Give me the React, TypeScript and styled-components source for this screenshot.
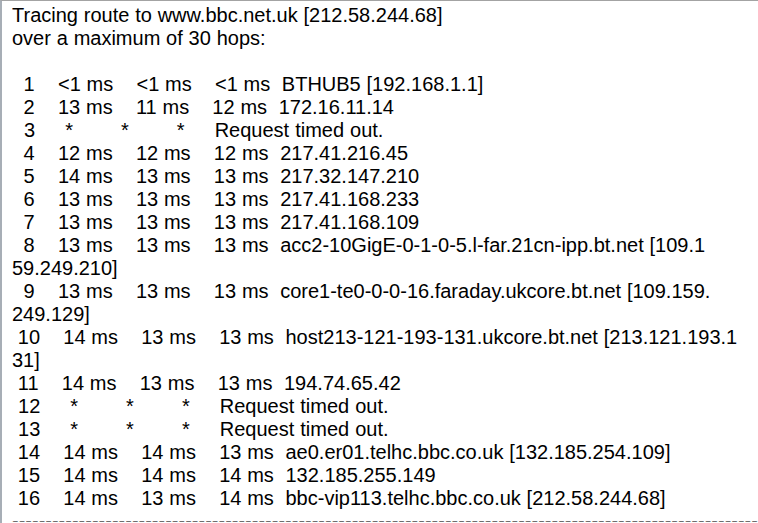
import React from "react";
import styled, { createGlobalStyle } from "styled-components";

const GlobalStyle = createGlobalStyle`
  html, body {
    margin: 0;
    padding: 0;
    background: #ffffff;
  }
  body {
    width: 758px;
    height: 523px;
    overflow: hidden;
  }
`;

const Window = styled.div`
  box-sizing: border-box;
  width: 758px;
  height: 523px;
  overflow: hidden;
  background: #ffffff;
  border-top: 1px solid #a3a3a3;
  border-left: 2px solid #a7aeb6;
  padding: 3px 0 0 10px;
`;

const Output = styled.div`
  display: flex;
  flex-direction: column;
  font-family: "Liberation Sans", Arial, sans-serif;
  font-size: 20px;
  line-height: 23px;
  color: #000000;
`;

const Line = styled.div<{ $timeout?: boolean }>`
  white-space: pre;
  height: 23px;
  overflow: hidden;
  word-spacing: ${(p) => (p.$timeout ? "0.45px" : "0.25px")};
`;

const Rule = styled.div`
  white-space: pre;
  height: 12px;
  line-height: 23px;
  overflow: hidden;
  color: #222222;
`;

const lines: string[] = [
  "Tracing route to www.bbc.net.uk [212.58.244.68]",
  "over a maximum of 30 hops:",
  "",
  "  1    <1 ms    <1 ms    <1 ms  BTHUB5 [192.168.1.1]",
  "  2    13 ms    11 ms    12 ms  172.16.11.14",
  "  3     *        *        *     Request timed out.",
  "  4    12 ms    12 ms    12 ms  217.41.216.45",
  "  5    14 ms    13 ms    13 ms  217.32.147.210",
  "  6    13 ms    13 ms    13 ms  217.41.168.233",
  "  7    13 ms    13 ms    13 ms  217.41.168.109",
  "  8    13 ms    13 ms    13 ms  acc2-10GigE-0-1-0-5.l-far.21cn-ipp.bt.net [109.1",
  "59.249.210]",
  "  9    13 ms    13 ms    13 ms  core1-te0-0-0-16.faraday.ukcore.bt.net [109.159.",
  "249.129]",
  " 10    14 ms    13 ms    13 ms  host213-121-193-131.ukcore.bt.net [213.121.193.1",
  "31]",
  " 11    14 ms    13 ms    13 ms  194.74.65.42",
  " 12     *        *        *     Request timed out.",
  " 13     *        *        *     Request timed out.",
  " 14    14 ms    14 ms    13 ms  ae0.er01.telhc.bbc.co.uk [132.185.254.109]",
  " 15    14 ms    14 ms    14 ms  132.185.255.149",
  " 16    14 ms    13 ms    14 ms  bbc-vip113.telhc.bbc.co.uk [212.58.244.68]",
];

export default function App() {
  return (
    <>
      <GlobalStyle />
      <Window>
        <Output>
          {lines.map((text, i) => (
            <Line key={i} $timeout={text.includes("Request timed out")}>
              {text}
            </Line>
          ))}
          <Rule>{"-".repeat(120)}</Rule>
        </Output>
      </Window>
    </>
  );
}
